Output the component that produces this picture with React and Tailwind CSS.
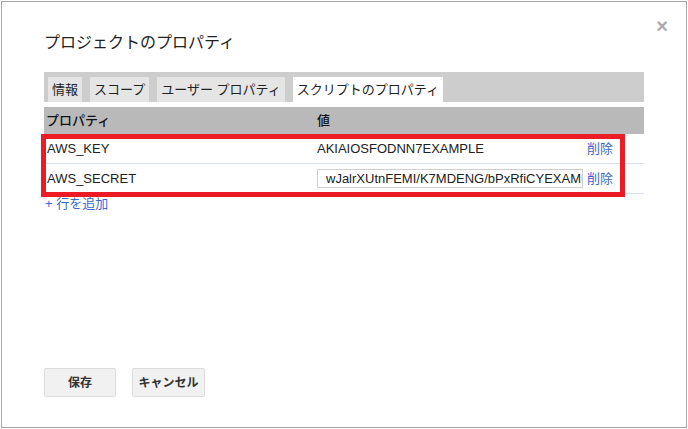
import React from "react";

const font = { fontFamily: '"Liberation Sans", "Noto Sans CJK JP", sans-serif' };

function Tab({ label, active }) {
  return (
    <div
      className={`h-[25px] px-[4px] flex items-center text-[13px] leading-none text-[#222] ${active ? "bg-white" : "bg-[#e5e5e5]"}`}
    >
      {label}
    </div>
  );
}

export default function App() {
  return (
    <div style={font} className="w-[688px] h-[429px] bg-white p-[1px]">
      <div className="relative w-full h-full border border-[#a6a6a6] flex flex-col pl-[42px] pr-[42px]">
        <div className="absolute right-[18px] top-[14px] text-[#ababab] text-[20px] font-bold leading-none">×</div>
        <div className="mt-[30px] h-[22px] text-[16px] leading-[22px] text-[#222]">プロジェクトのプロパティ</div>
        <div className="mt-[18px] w-[600px] h-[30px] bg-[#cdcdcd] flex items-end gap-[8px] pl-[4px]">
          <Tab label="情報" />
          <Tab label="スコープ" />
          <Tab label="ユーザー プロパティ" />
          <Tab label="スクリプトのプロパティ" active />
        </div>
        <div className="relative w-[600px] mt-[5px]">
          <div className="h-[27px] bg-[#b9b9b9] flex items-center text-[13px] text-[#111] font-medium">
            <div className="w-[273px] pl-[2px]">プロパティ</div>
            <div>値</div>
          </div>
          <div className="h-[30px] border-b border-[#d3e2f4] flex items-center text-[13px] text-[#222]">
            <div className="w-[273px] pl-[3px]">AWS_KEY</div>
            <div className="w-[270px]">AKIAIOSFODNN7EXAMPLE</div>
            <div className="text-[#3a68d0]">削除</div>
          </div>
          <div className="h-[30px] border-b border-[#d3e2f4] flex items-center text-[13px] text-[#222]">
            <div className="w-[273px] pl-[3px]">AWS_SECRET</div>
            <input
              readOnly
              value="wJalrXUtnFEMI/K7MDENG/bPxRfiCYEXAMPLEKEY"
              style={font}
              className="w-[266px] h-[19px] mr-[4px] border border-[#cfcfcf] pl-[8px] text-[13px] text-[#222] outline-none bg-white"
            />
            <div className="text-[#3a68d0]">削除</div>
          </div>
          <div className="absolute left-[-3px] top-[27px] w-[584px] h-[63px] border-[5px] border-[#ed1c24] pointer-events-none"></div>
        </div>
        <div className="mt-[2px] h-[16px] text-[13px] leading-[16px] text-[#3a68d0] pl-[1px]">+ 行を追加</div>
        <div className="mt-auto mb-[30px] flex gap-[16px]">
          <button className="w-[72px] h-[29px] rounded-[2px] border border-[#dcdcdc] bg-[#f1f1f1] text-[12px] font-bold text-[#333]">保存</button>
          <button className="w-[73px] h-[29px] rounded-[2px] border border-[#dcdcdc] bg-[#f1f1f1] text-[12px] font-bold text-[#333]">キャンセル</button>
        </div>
      </div>
    </div>
  );
}
